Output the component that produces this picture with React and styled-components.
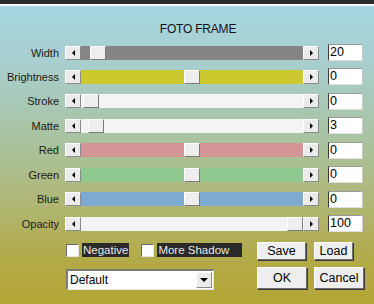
import React from "react";
import styled, { createGlobalStyle } from "styled-components";

const GlobalStyle = createGlobalStyle`
  html, body {
    margin: 0;
    padding: 0;
    background: #b0a436;
  }
  body {
    font-family: "Liberation Sans", "DejaVu Sans", Arial, sans-serif;
  }
`;

const sliders = [
  { name: "Width", value: 20, pos: 9, track: "#858585" },
  { name: "Brightness", value: 0, pos: 103, track: "#cbc92d" },
  { name: "Stroke", value: 0, pos: 2, track: "hatch" },
  { name: "Matte", value: 3, pos: 7, track: "hatch" },
  { name: "Red", value: 0, pos: 103, track: "#d39596" },
  { name: "Green", value: 0, pos: 103, track: "#8fc98f" },
  { name: "Blue", value: 0, pos: 103, track: "#7eaad2" },
  { name: "Opacity", value: 100, pos: 206, track: "hatch" },
];

function App() {
  return (
    <>
      <GlobalStyle />
      <Frame>
        <TopBar />
        <Title>FOTO FRAME</Title>
        <Rows>
          {sliders.map((s) => (
            <Row key={s.name}>
              <Label>{s.name}</Label>
              <Slider>
                <ArrowButton>
                  <Tri $dir="left" />
                </ArrowButton>
                <Track $color={s.track}>
                  <Thumb style={{ left: s.pos }} />
                </Track>
                <ArrowButton>
                  <Tri $dir="right" />
                </ArrowButton>
              </Slider>
              <ValueBox>{s.value}</ValueBox>
            </Row>
          ))}
        </Rows>
        <Bottom>
          <LeftCol>
            <Checks>
              <Check>
                <Box />
                <CheckText>Negative</CheckText>
              </Check>
              <Check>
                <Box />
                <CheckText $pad={13}>More Shadow</CheckText>
              </Check>
            </Checks>
            <Select>
              <SelectText>Default</SelectText>
              <SelectButton>
                <Tri $dir="down" />
              </SelectButton>
            </Select>
          </LeftCol>
          <Buttons>
            <Button $w={49} $h={18}>Save</Button>
            <Button $w={39} $h={18}>Load</Button>
            <Button $w={50} $h={22}>OK</Button>
            <Button $w={50} $h={22}>Cancel</Button>
          </Buttons>
        </Bottom>
      </Frame>
    </>
  );
}

export default App;

const Frame = styled.div`
  width: 374px;
  height: 304px;
  overflow: hidden;
  display: flex;
  flex-direction: column;
  background: linear-gradient(
    to bottom,
    #a7d8e5 0px,
    #a8cfcf 60px,
    #a9c3a0 140px,
    #afb777 200px,
    #b3aa48 260px,
    #b3a535 304px
  );
`;

const TopBar = styled.div`
  height: 4px;
  background: #2b2b2b;
  border-bottom: 2px solid #f6f6f6;
`;

const Title = styled.div`
  margin-top: 16px;
  height: 16px;
  text-align: center;
  font-size: 12px;
  color: #111;
  padding-left: 22px;
  letter-spacing: -0.2px;
`;

const Rows = styled.div`
  margin-top: 6px;
  display: flex;
  flex-direction: column;
  gap: 7.45px;
`;

const Row = styled.div`
  display: flex;
  align-items: center;
  height: 17px;
`;

const Label = styled.div`
  width: 59px;
  text-align: right;
  font-size: 11px;
  color: #1a1a1a;
`;

const Slider = styled.div`
  margin-left: 6px;
  width: 254px;
  height: 14px;
  display: flex;
`;

const ArrowButton = styled.div`
  width: 16px;
  height: 14px;
  box-sizing: border-box;
  background: #ebebeb;
  border-top: 1px solid #fff;
  border-left: 1px solid #fff;
  border-right: 1px solid #8a8a8a;
  border-bottom: 1px solid #8a8a8a;
  display: flex;
  align-items: center;
  justify-content: center;
`;

const Tri = styled.span`
  width: 0;
  height: 0;
  border-style: solid;
  ${(p) =>
    p.$dir === "left"
      ? "border-width: 3px 3px 3px 0; border-color: transparent #000 transparent transparent;"
      : p.$dir === "right"
      ? "border-width: 3px 0 3px 3px; border-color: transparent transparent transparent #000;"
      : "border-width: 4px 4px 0 4px; border-color: #000 transparent transparent transparent;"}
`;

const Track = styled.div`
  position: relative;
  flex: 1;
  height: 14px;
  ${(p) =>
    p.$color === "hatch"
      ? "background: repeating-conic-gradient(#ededed 0 25%, #fbfbfb 0 50%) 0 0 / 2px 2px;"
      : `background: ${p.$color};`}
`;

const Thumb = styled.div`
  position: absolute;
  top: 0;
  width: 16px;
  height: 14px;
  box-sizing: border-box;
  background: #eeeeee;
  border-top: 1px solid #fff;
  border-left: 1px solid #fff;
  border-right: 1px solid #7a7a7a;
  border-bottom: 1px solid #7a7a7a;
`;

const ValueBox = styled.div`
  margin-left: 9px;
  width: 35px;
  height: 17px;
  box-sizing: border-box;
  background: #fff;
  border-left: 1px solid #3a3a3a;
  border-top: 1px solid #9a9a9a;
  border-right: 1px solid #c8c8c8;
  border-bottom: 1px solid #e0e0e0;
  padding-left: 1px;
  font-size: 12.5px;
  line-height: 15px;
  color: #000;
`;

const Bottom = styled.div`
  margin-top: 10px;
  display: flex;
  justify-content: space-between;
  padding-left: 66px;
  padding-right: 10px;
`;

const LeftCol = styled.div`
  display: flex;
  flex-direction: column;
  gap: 12px;
  padding-top: 1px;
`;

const Checks = styled.div`
  display: flex;
  gap: 12px;
  height: 14px;
  align-items: center;
`;

const Check = styled.div`
  display: flex;
  align-items: center;
  gap: 3px;
`;

const Box = styled.div`
  width: 13px;
  height: 13px;
  box-sizing: border-box;
  background: #fff;
  border-top: 1px solid #6a6a6a;
  border-left: 1px solid #6a6a6a;
  border-right: 1px solid #e4e4e4;
  border-bottom: 1px solid #e4e4e4;
`;

const CheckText = styled.div`
  background: #2a2a2a;
  color: #e8e8e8;
  font-size: 11.5px;
  height: 14px;
  line-height: 14px;
  padding: 0 ${(p) => p.$pad || 1}px 0 1px;
`;

const Select = styled.div`
  width: 148px;
  height: 21px;
  box-sizing: border-box;
  background: #fff;
  border-top: 2px solid #7c7c7c;
  border-left: 2px solid #7c7c7c;
  border-right: 1px solid #e8e8e8;
  border-bottom: 1px solid #e8e8e8;
  display: flex;
  align-items: center;
  justify-content: space-between;
`;

const SelectText = styled.div`
  font-size: 12px;
  color: #000;
  padding-left: 2px;
`;

const SelectButton = styled(ArrowButton)`
  width: 16px;
  height: 16px;
  margin-right: 1px;
`;

const Buttons = styled.div`
  display: grid;
  grid-template-columns: 50px 50px;
  column-gap: 7px;
  row-gap: 6px;
  align-items: start;
`;

const Button = styled.div`
  width: ${(p) => p.$w}px;
  height: ${(p) => p.$h}px;
  box-sizing: border-box;
  background: #eeeeee;
  border-top: 1px solid #fff;
  border-left: 1px solid #fff;
  border-right: 1px solid #6e6e6e;
  border-bottom: 1px solid #6e6e6e;
  box-shadow: 1px 1px 0 #3a3a3a;
  display: flex;
  align-items: center;
  justify-content: center;
  font-size: 12.5px;
  color: #000;
`;
